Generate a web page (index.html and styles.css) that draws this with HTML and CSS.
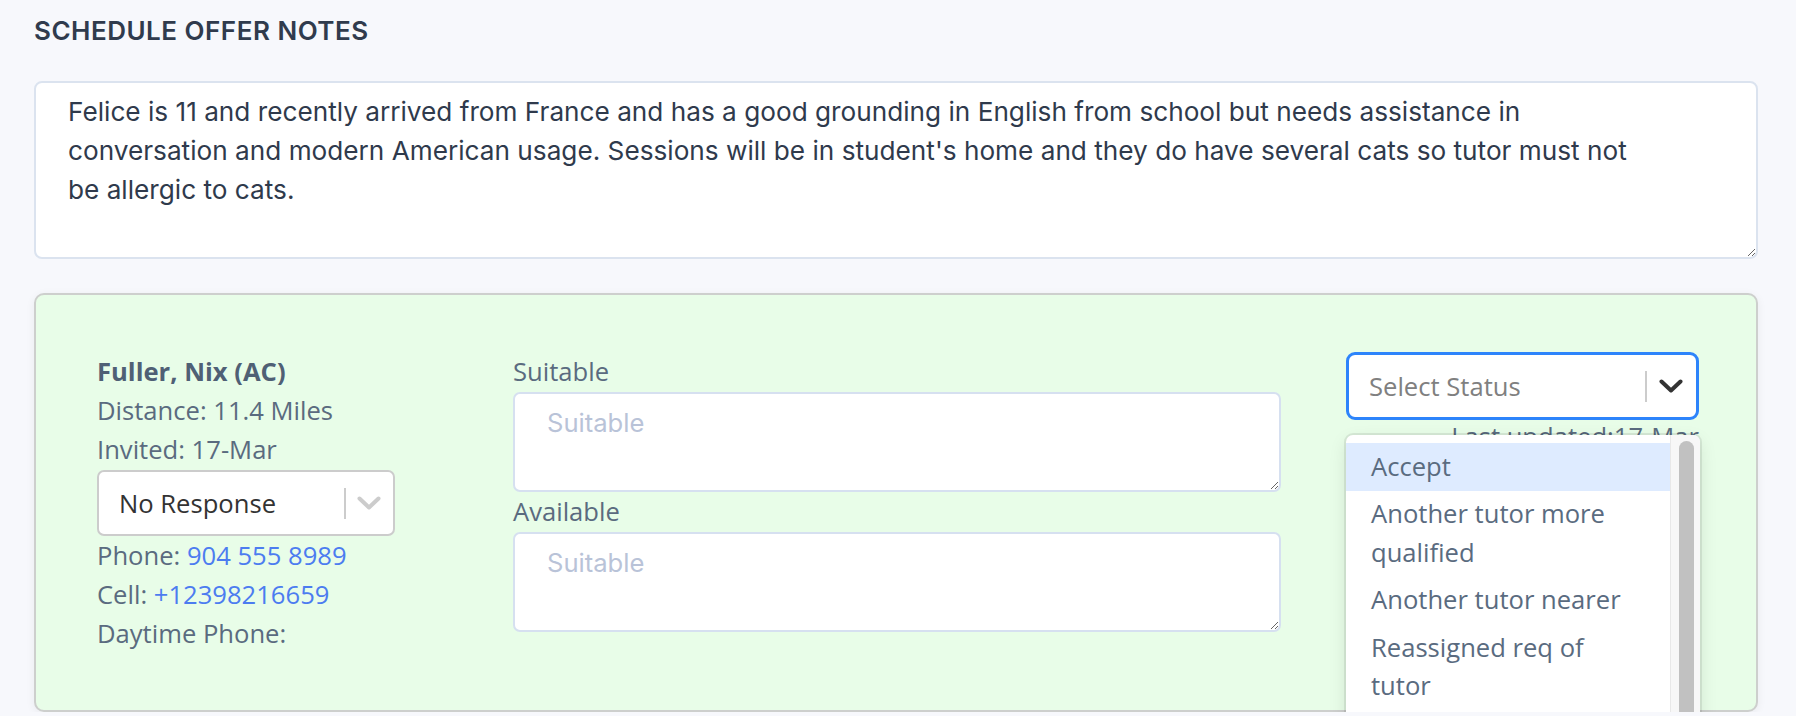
FILE: index.html
```html
<!DOCTYPE html>
<html lang="en">
<head>
<meta charset="utf-8">
<title>Schedule Offer Notes</title>
<link rel="stylesheet" href="styles.css">
</head>
<body>
<div class="page">
  <h2 class="section-title">SCHEDULE OFFER NOTES</h2>
  <textarea class="notes">Felice is 11 and recently arrived from France and has a good grounding in English from school but needs assistance in
conversation and modern American usage. Sessions will be in student's home and they do have several cats so tutor must not
be allergic to cats.</textarea>

  <div class="card">
    <div class="tutor-info">
      <div class="name">Fuller, Nix (AC)</div>
      <div class="line">Distance: 11.4 Miles</div>
      <div class="line">Invited: 17-Mar</div>
      <div class="select select-plain">
        <div class="select-value">No Response</div>
        <div class="select-indicators">
          <span class="select-sep"></span>
          <span class="select-chev">
            <svg width="24" height="14" viewBox="0 0 24 14"><path d="M2.5 2.5 L12 11.5 L21.5 2.5" fill="none" stroke="currentColor" stroke-width="4" stroke-linecap="round" stroke-linejoin="round"/></svg>
          </span>
        </div>
      </div>
      <div class="line">Phone: <a class="link" href="#">904 555 8989</a></div>
      <div class="line">Cell: <a class="link" href="#">+12398216659</a></div>
      <div class="line">Daytime Phone:</div>
    </div>

    <div class="fields">
      <label class="field-label">Suitable</label>
      <textarea class="field-input" placeholder="Suitable"></textarea>
      <label class="field-label">Available</label>
      <textarea class="field-input" placeholder="Suitable"></textarea>
    </div>

    <div class="status">
      <div class="select-wrap">
        <div class="select select-focused">
          <div class="select-value placeholder">Select Status</div>
          <div class="select-indicators">
            <span class="select-sep"></span>
            <span class="select-chev">
              <svg width="24" height="14" viewBox="0 0 24 14"><path d="M2.5 2.5 L12 11.5 L21.5 2.5" fill="none" stroke="currentColor" stroke-width="4" stroke-linecap="round" stroke-linejoin="round"/></svg>
            </span>
          </div>
        </div>
        <div class="menu">
          <div class="menu-list">
            <div class="option option-focused">Accept</div>
            <div class="option">Another tutor more qualified</div>
            <div class="option">Another tutor nearer</div>
            <div class="option">Reassigned req of tutor</div>
          </div>
          <div class="menu-scroll"><div class="menu-thumb"></div></div>
        </div>
      </div>
      <div class="updated">Last updated:17-Mar</div>
    </div>
  </div>
</div>
</body>
</html>
```

FILE: styles.css
```css
* { box-sizing: border-box; }

html, body {
  margin: 0;
  padding: 0;
  background: #f7f8fc;
  overflow: hidden;
}

body {
  font-family: "Open Sans", "Noto Sans", sans-serif;
  font-size: 25.6px;
  line-height: 39px;
  color: #5a6b7f;
}

.page {
  padding: 13px 38px 0 34px;
}

.section-title {
  margin: 0 0 32px 0;
  font-family: Inter, "Open Sans", sans-serif;
  font-weight: 600;
  font-size: 26px;
  line-height: 36px;
  letter-spacing: 0.5px;
  color: #303b4d;
}

.notes {
  display: block;
  width: 100%;
  height: 178px;
  margin: 0;
  padding: 9px 32px 9px 32px;
  border: 2px solid #dbe3ef;
  border-radius: 8px;
  background: #ffffff;
  font-family: Inter, "Open Sans", sans-serif;
  font-size: 26.2px;
  line-height: 39px;
  color: #2f3a4c;
  outline: none;
}

.card {
  display: flex;
  align-items: flex-start;
  margin-top: 34px;
  padding: 57px 57px 57px 61px;
  background: #e8fde8;
  border: 2px solid #cdcfcd;
  border-radius: 10px;
  box-shadow: 0 2px 10px rgba(0, 0, 0, 0.06);
}

.tutor-info {
  flex: 0 0 298px;
  margin-right: 118px;
}

.name {
  font-weight: 700;
  color: #4f6075;
}

.link {
  color: #4c7cf0;
  text-decoration: none;
}

.select {
  display: flex;
  align-items: center;
  background: #ffffff;
  font-family: "Open Sans", "Noto Sans", sans-serif;
  font-size: 25.6px;
  line-height: 39px;
}

.select-plain {
  height: 66px;
  margin-top: 1px;
  border: 2px solid #cccccc;
  border-radius: 7px;
}

.select-focused {
  height: 68px;
  border: 3px solid #2d84fb;
  border-radius: 9px;
}

.select-value {
  flex: 1;
  padding-left: 20px;
  color: #333333;
  white-space: nowrap;
}

.select-value.placeholder {
  color: #808080;
}

.select-indicators {
  display: flex;
  align-items: center;
  align-self: stretch;
}

.select-sep {
  width: 2px;
  height: 31px;
  background: #cccccc;
}

.select-chev {
  display: flex;
  align-items: center;
  padding: 0 12px 0 11px;
  color: #cccccc;
}

.select-focused .select-chev {
  color: #333333;
  padding: 0 13px 0 12px;
}

.fields {
  flex: 0 0 768px;
  display: flex;
  flex-direction: column;
}

.field-label {
  display: block;
}

.field-input {
  display: block;
  width: 100%;
  height: 100px;
  margin: 1px 0 0 0;
  padding: 9px 32px;
  border: 2px solid #d6e0f0;
  border-radius: 7px;
  background: #ffffff;
  font-family: Inter, "Open Sans", sans-serif;
  font-size: 25.6px;
  line-height: 39px;
  color: #2f3a4c;
  outline: none;
}

.field-input::placeholder {
  color: #b9c3d8;
}

.status {
  flex: 0 0 353px;
  margin-left: auto;
}

.select-wrap {
  position: relative;
}

.updated {
  text-align: right;
  line-height: 33px;
  white-space: nowrap;
}

.menu {
  position: absolute;
  top: calc(100% + 15px);
  left: 0;
  width: 354px;
  height: 300px;
  display: flex;
  overflow: hidden;
  background: #ffffff;
  border-radius: 7px;
  box-shadow: 0 0 0 2px rgba(0, 0, 0, 0.08), 0 6px 18px rgba(0, 0, 0, 0.10);
  z-index: 5;
}

.menu-list {
  flex: 1;
  padding-top: 8px;
  overflow: hidden;
}

.option {
  padding: 4.5px 25px;
  line-height: 38.5px;
  color: #5a6b80;
}

.option-focused {
  background: #deebff;
}

.menu-scroll {
  flex: 0 0 30px;
  background: #f7f7f7;
  border-left: 1px solid #e8e8e8;
  padding: 6px 6px 0 8px;
}

.menu-thumb {
  height: 420px;
  border-radius: 8px;
  background: #c1c1c1;
}
```
